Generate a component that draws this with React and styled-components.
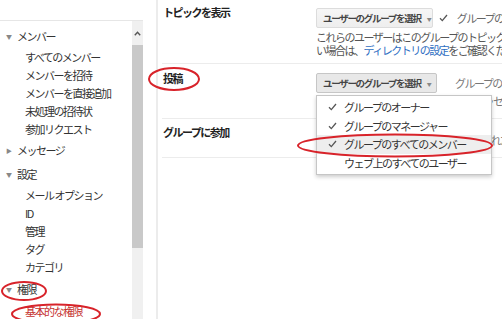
import React from "react";
import styled, { createGlobalStyle } from "styled-components";

const Global = createGlobalStyle`
  html, body { margin: 0; padding: 0; background: #fff; }
  body {
    font-family: "Noto Sans CJK JP", "Noto Sans", sans-serif;
    color: #333;
    -webkit-font-smoothing: antialiased;
  }
`;

const Page = styled.div`
  position: relative;
  width: 502px;
  height: 319px;
  overflow: hidden;
  display: flex;
  background: #fff;
  font-size: 11px;
  letter-spacing: -1.5px;
`;

const Sidebar = styled.aside`
  width: 143px;
  flex: none;
  margin-top: 20px;
  border-top: 1px solid #e6e6e6;
  display: flex;
`;

const Nav = styled.nav`
  flex: 1;
  padding-top: 6px;
`;

const Section = styled.div`
  display: flex;
  align-items: center;
  height: 18px;
  margin-top: ${(p) => p.$gap || 0}px;
  padding-left: 6px;
  color: #333;
`;

const Caret = styled.span`
  width: 11px;
  font-size: 6px;
  color: #888;
  letter-spacing: 0;
`;

const Item = styled.div`
  height: 18px;
  line-height: 18px;
  padding-left: 25px;
  margin-top: ${(p) => p.$mt || 0}px;
  color: ${(p) => (p.$active ? "#c5322f" : "#333")};
  white-space: nowrap;
`;

const Spacer = styled.div`
  height: ${(p) => p.$h}px;
`;

const Scrollbar = styled.div`
  width: 11px;
  flex: none;
  background: #f0f0f0;
  display: flex;
  flex-direction: column;
`;

const ScrollUp = styled.div`
  height: 24px;
  display: flex;
  align-items: center;
  justify-content: center;
  background: #f0f0f0;
`;

const Thumb = styled.div`
  height: 203px;
  background: #c9c9c9;
`;

const Divider = styled.div`
  width: 2px;
  flex: none;
  margin-left: 13px;
  background: #ececec;
`;

const Main = styled.main`
  flex: 1;
  padding-left: 4px;
  min-width: 0;
`;

const Row = styled.section`
  display: flex;
  height: ${(p) => p.$h}px;
  border-bottom: 1px solid #ececec;
  padding-top: ${(p) => p.$pt || 8}px;
  box-sizing: border-box;
`;

const Label = styled.div`
  width: 153px;
  flex: none;
  padding-left: 1px;
  font-weight: 700;
  color: #222;
  line-height: 14px;
  margin-top: ${(p) => p.$mt || 0}px;
`;

const Control = styled.div`
  flex: 1;
  min-width: 0;
  white-space: nowrap;
`;

const Line = styled.div`
  display: flex;
  align-items: ${(p) => (p.$top ? "flex-start" : "center")};
  gap: 6px;
`;

const DropWrap = styled.div`
  position: relative;
  flex: none;
`;

const SelectButton = styled.div`
  width: 121px;
  height: 20px;
  box-sizing: border-box;
  border: 1px solid ${(p) => (p.$open ? "#c6c6c6" : "#dcdcdc")};
  border-radius: 2px;
  background: ${(p) =>
    p.$open ? "#e8e8e8" : "linear-gradient(#f6f6f6, #eeeeee)"};
  display: flex;
  align-items: center;
  padding-left: 6px;
  font-size: 9.5px;
  font-weight: 700;
  color: #444;
  letter-spacing: -1.3px;
`;

const Arrow = styled.span`
  margin-left: 6px;
  font-size: 5px;
  color: #888;
  letter-spacing: 0;
`;

const Check = styled.span`
  width: ${(p) => p.$w || 12}px;
  flex: none;
  display: inline-flex;
  color: #555;
  letter-spacing: 0;
`;

const Muted = styled.span`
  color: #666;
`;

const Desc = styled.div`
  margin-top: 3px;
  line-height: 13px;
  color: #555;
`;

const Link = styled.a`
  color: #2f6ec2;
  text-decoration: none;
`;

const SideText = styled.div`
  margin-left: ${(p) => p.$ml ?? 12}px;
  padding-top: ${(p) => p.$pt || 0}px;
  line-height: 18px;
  color: #777;
`;

const Menu = styled.div`
  position: absolute;
  top: 22px;
  left: 0;
  width: 176px;
  box-sizing: border-box;
  background: #fff;
  border: 1px solid #c6c6c6;
  box-shadow: 0 2px 4px rgba(0, 0, 0, 0.2);
  padding: 2px 0 2px;
  z-index: 2;
`;

const MenuItem = styled.div`
  height: 18.6px;
  display: flex;
  align-items: center;
  padding-left: 11px;
  background: ${(p) => (p.$hover ? "#eeeeee" : "transparent")};
  color: #333;
`;

const Annotations = styled.svg`
  position: absolute;
  left: 0;
  top: 0;
  pointer-events: none;
  z-index: 5;
`;

const CheckIcon = () => (
  <svg width="9" height="8" viewBox="0 0 9 8">
    <path d="M1 4.3 L3.3 6.6 L8 1" fill="none" stroke="#555" strokeWidth="1.3" />
  </svg>
);

const UpIcon = () => (
  <svg width="7" height="5" viewBox="0 0 7 5">
    <path d="M0.8 4.2 L3.5 1.3 L6.2 4.2" fill="none" stroke="#555" strokeWidth="1.4" />
  </svg>
);

const members = [
  "すべてのメンバー",
  "メンバーを招待",
  "メンバーを直接追加",
  "未処理の招待状",
  "参加リクエスト",
];

const settings = ["メール オプション", "ID", "管理", "タグ", "カテゴリ"];

const menuItems = [
  { label: "グループのオーナー", checked: true },
  { label: "グループのマネージャー", checked: true },
  { label: "グループのすべてのメンバー", checked: true, hover: true },
  { label: "ウェブ上のすべてのユーザー", checked: false },
];

export default function App() {
  return (
    <>
      <Global />
      <Page>
        <Sidebar>
          <Nav>
            <Section $gap={0}>
              <Caret>▼</Caret>メンバー
            </Section>
            <Spacer $h={3} />
            {members.map((m) => (
              <Item key={m}>{m}</Item>
            ))}
            <Section $gap={3}>
              <Caret>▶</Caret>メッセージ
            </Section>
            <Section $gap={6}>
              <Caret>▼</Caret>設定
            </Section>
            <Spacer $h={3} />
            {settings.map((m) => (
              <Item key={m}>{m}</Item>
            ))}
            <Section $gap={4}>
              <Caret>▼</Caret>権限
            </Section>
            <Item $active $mt={4}>基本的な権限</Item>
          </Nav>
          <Scrollbar>
            <ScrollUp>
              <UpIcon />
            </ScrollUp>
            <Thumb />
          </Scrollbar>
        </Sidebar>
        <Divider />
        <Main>
          <Row $h={64}>
            <Label $mt={-3}>トピックを表示</Label>
            <Control>
              <Line>
                <SelectButton>
                  ユーザーのグループを選択<Arrow>▼</Arrow>
                </SelectButton>
                <Check>
                  <CheckIcon />
                </Check>
                <Muted>グループのメンバー</Muted>
              </Line>
              <Desc>
                これらのユーザーはこのグループのトピックを表示できます。表示されな
                <br />
                い場合は、<Link>ディレクトリの設定</Link>をご確認ください。
              </Desc>
            </Control>
          </Row>
          <Row $h={55} $pt={9}>
            <Label $mt={-2}>投稿</Label>
            <Control>
              <Line $top>
                <DropWrap>
                  <SelectButton $open>
                    ユーザーのグループを選択<Arrow>▼</Arrow>
                  </SelectButton>
                  <Menu>
                    {menuItems.map((it) => (
                      <MenuItem key={it.label} $hover={it.hover}>
                        <Check $w={16}>{it.checked ? <CheckIcon /> : null}</Check>
                        {it.label}
                      </MenuItem>
                    ))}
                  </Menu>
                </DropWrap>
                <SideText $pt={1}>
                  グループのメンバーは
                  <br />
                  ーのメッセージを投稿
                </SideText>
              </Line>
            </Control>
          </Row>
          <Row $h={39} $pt={7}>
            <Label $mt={-1}>グループに参加</Label>
            <Control>
              <SideText $ml={146} $pt={5}>許可されたユーザー</SideText>
            </Control>
          </Row>
        </Main>
        <Annotations width="502" height="319" viewBox="0 0 502 319">
          <g fill="none" stroke="#d8232a" strokeWidth="2">
            <ellipse cx="174" cy="79" rx="25" ry="11" />
            <ellipse cx="395" cy="145.5" rx="97" ry="11" />
            <ellipse cx="24" cy="291" rx="22" ry="9" />
            <ellipse cx="56" cy="314" rx="44" ry="9.5" />
          </g>
        </Annotations>
      </Page>
    </>
  );
}
